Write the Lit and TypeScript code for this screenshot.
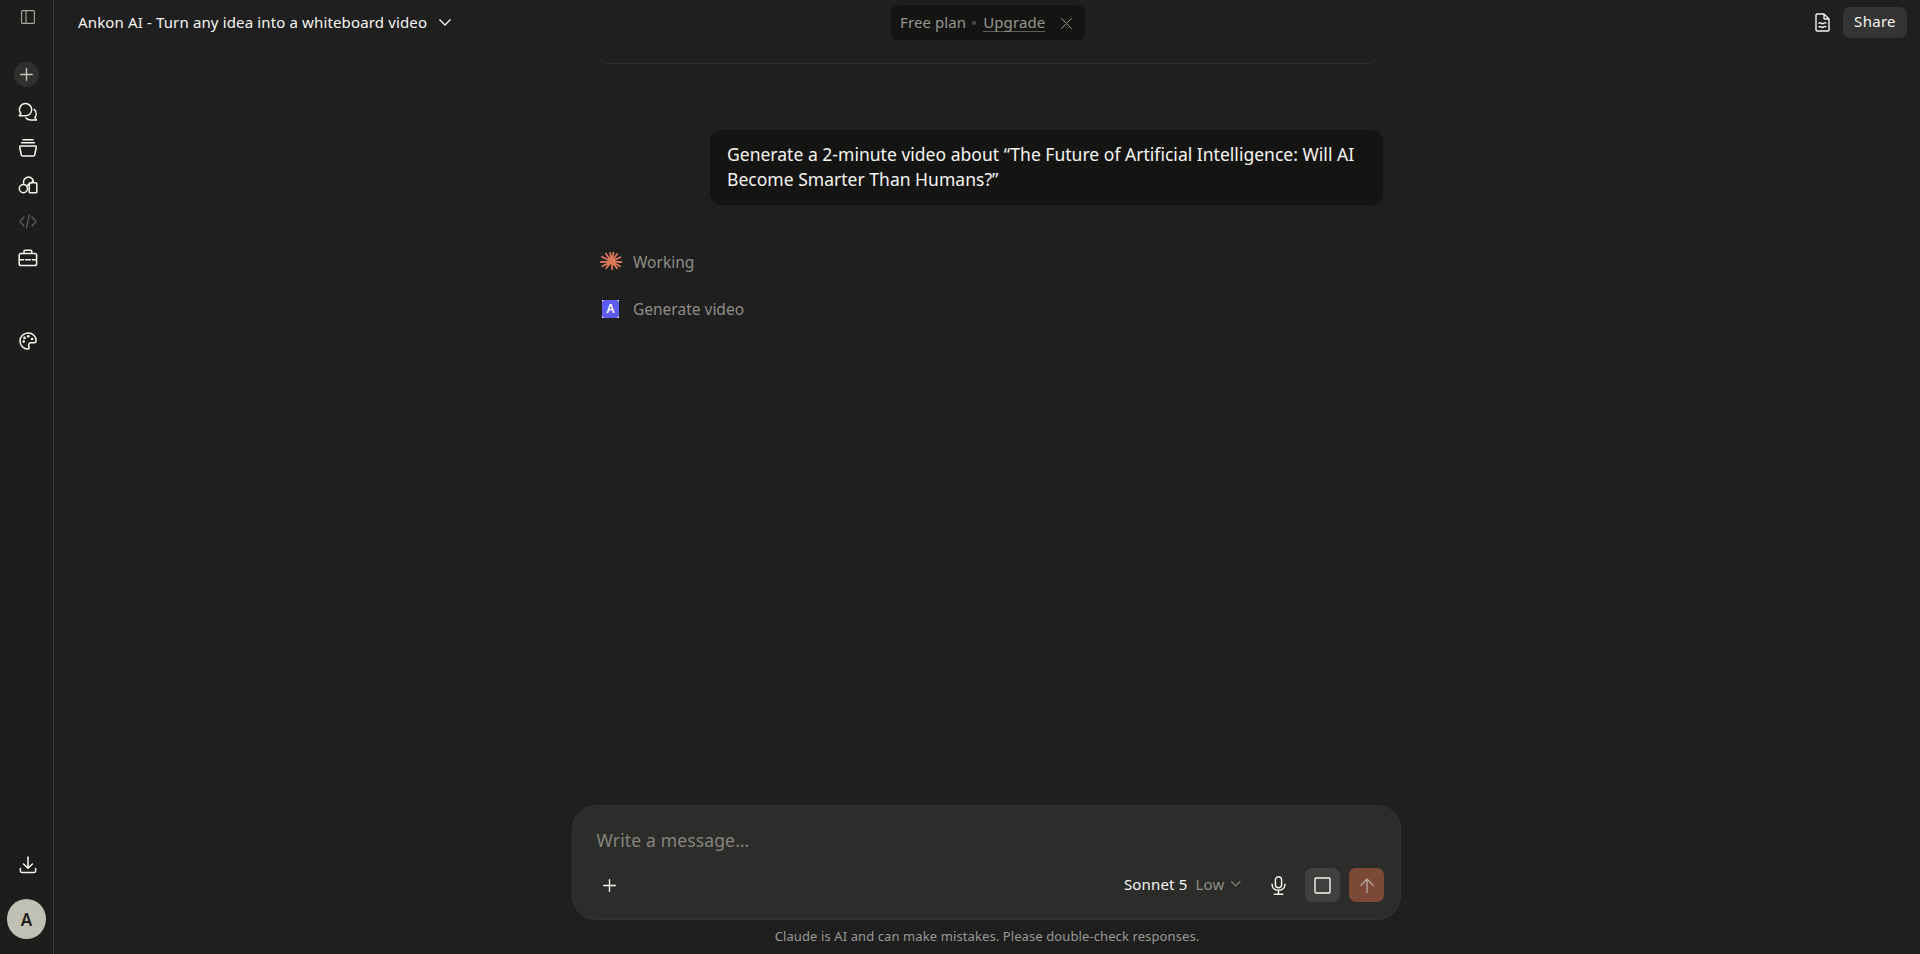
import { LitElement, css, html, svg } from "lit";
import { customElement, property } from "lit/decorators.js";
import { classMap } from "lit/directives/class-map.js";

const icons: Record<string, { w: number; h: number; body: unknown }> = {
  panel: {
    w: 14,
    h: 14,
    body: svg`<rect x="0.6" y="0.6" width="12.8" height="12.8" rx="1" /><path d="M5 0.6v12.8" />`,
  },
  plus: { w: 13, h: 13, body: svg`<path d="M6.5 0.7v11.6M0.7 6.5h11.6" />` },
  chats: {
    w: 20,
    h: 20,
    body: svg`<path d="M7.6 1.6a6.1 6.1 0 1 1 0 12.2H1.3l1.6-2.2A6.1 6.1 0 0 1 7.6 1.6z" />
      <path d="M16.2 7.4c2.3 2.1 2.6 5.5 0.7 8l1.5 2.6h-5.6c-2 0-3.8-0.7-4.9-2" />`,
  },
  projects: {
    w: 20,
    h: 20,
    body: svg`<path d="M5 1.8h10M3.6 4.8h12.8" />
      <path d="M2.6 8h14.8c0.6 0 1 0.4 0.9 1l-1.6 8c-0.1 0.7-0.6 1.1-1.3 1.1H4.6c-0.7 0-1.2-0.4-1.3-1.1L1.7 9c-0.1-0.6 0.3-1 0.9-1z" />`,
  },
  artifacts: {
    w: 20,
    h: 20,
    body: svg`<circle cx="5.4" cy="13.6" r="4.1" />
      <path d="M5.6 8.2a4.9 4.9 0 0 1 9.7-2.2" />
      <path d="M8.6 10.8L15.4 6.2" />
      <rect x="11.2" y="7.8" width="7.6" height="9.9" rx="0.8" />`,
  },
  code: {
    w: 18,
    h: 15,
    body: svg`<path d="M5 3L1 7.5 5 12M13 3l4 4.5L13 12M10.4 0.8L7.4 14.2" />`,
  },
  briefcase: {
    w: 20,
    h: 18,
    body: svg`<rect x="1.2" y="4.4" width="17.4" height="12.2" rx="1.8" />
      <path d="M6 4.2V2.4c0-0.7 0.4-1.1 1.1-1.1h5.6c0.7 0 1.1 0.4 1.1 1.1v1.8M1.4 10.8h4.2M7.6 10.8h4.8M14.4 10.8h4" />`,
  },
  palette: {
    w: 18,
    h: 18,
    body: svg`<path d="M9.2 1C4.6 1 1 4.5 1 8.9 1 13.5 4.6 17.1 8.9 17.1c1.2 0 1.4-0.9 1-2-0.5-1.6-0.6-4.3 2-4.3h3.2c1.4 0 2-0.7 2-2C17.1 4.3 13.7 1 9.2 1z" />
      <g class="dots"><circle cx="4.7" cy="9.6" r="1.3" /><circle cx="5.5" cy="5.9" r="1.3" /><circle cx="9.2" cy="4.3" r="1.3" /><circle cx="13.1" cy="7" r="1.3" /></g>`,
  },
  download: {
    w: 18,
    h: 18,
    body: svg`<path d="M9 1v11M4.5 8L9 12.2 13.5 8M1.4 12.5v2.6c0 0.8 0.5 1.3 1.3 1.3h12.6c0.8 0 1.3-0.5 1.3-1.3v-2.6" />`,
  },
  chevron: { w: 12, h: 7, body: svg`<path d="M0.8 0.8L6 6l5.2-5.2" />` },
  close: { w: 11, h: 11, body: svg`<path d="M0.5 0.5l10 10M10.5 0.5l-10 10" />` },
  doc: {
    w: 15,
    h: 19,
    body: svg`<path d="M9 1H2.3C1.5 1 1 1.5 1 2.3v14.4c0 0.8 0.5 1.3 1.3 1.3h10.4c0.8 0 1.3-0.5 1.3-1.3V6L9 1v4.2c0 0.5 0.3 0.8 0.8 0.8H14" />
      <path d="M4 10.2q1.2-1 2.3 0t2.3 0 2.3-0.2M4 13.9q1.2-1 2.3 0t2.3 0 2.3-0.2" />`,
  },
  mic: {
    w: 15,
    h: 19,
    body: svg`<rect x="4.4" y="0.8" width="6.2" height="11" rx="3.1" />
      <path d="M1 8.2c0.2 3.7 2.8 6.1 6.5 6.1s6.3-2.4 6.5-6.1M7.5 14.4v3.6M3.2 18.2h8.6" />`,
  },
  stop: { w: 17, h: 17, body: svg`<rect x="1" y="1" width="15" height="15" rx="1" />` },
  arrow: { w: 14, h: 15, body: svg`<path d="M7 14.5V1.2M1 7.2L7 1l6 6.2" />` },
  spark: {
    w: 22,
    h: 18,
    body: svg`<path d="M11.3 9.6L5.8 1.6M11.3 9.6L10.2 0.8M11.3 9.6L13.5 0.8M11.3 9.6L17.2 2M11.3 9.6L20.4 5.2M11.3 9.6L21.3 10M11.3 9.6L20 14.2M11.3 9.6L17 16.2M11.3 9.6L12.3 17.2M11.3 9.6L6.2 16.2M11.3 9.6L2.2 14.2M11.3 9.6L0.8 10M11.3 9.6L2 4.8" />`,
  },
};

@customElement("ui-icon")
export class UiIcon extends LitElement {
  @property() name = "plus";

  static styles = css`
    :host {
      display: inline-flex;
      flex: none;
    }

    svg {
      display: block;
      fill: none;
      stroke: currentColor;
      stroke-width: var(--stroke, 1.4);
      stroke-linecap: round;
      stroke-linejoin: round;
    }

    .dots {
      fill: currentColor;
      stroke: none;
    }
  `;

  render() {
    const { w, h, body } = icons[this.name];
    return html`<svg width=${w} height=${h} viewBox="0 0 ${w} ${h}">${body}</svg>`;
  }
}

@customElement("side-rail")
export class SideRail extends LitElement {
  static styles = css`
    :host {
      display: flex;
      flex-direction: column;
      align-items: center;
      box-sizing: border-box;
      width: 54px;
      background: #1d1d1c;
      border-right: 1px solid #3e3e3d;
      color: #f7f6f1;
      --stroke: 1.5;
    }

    .item {
      display: flex;
      align-items: center;
      justify-content: center;
      height: 36.5px;
      padding-left: 3.5px;
    }

    .toggle {
      height: 34px;
      color: #a9a8a1;
      --stroke: 1.1;
    }

    .new {
      display: flex;
      align-items: center;
      justify-content: center;
      width: 25px;
      height: 25px;
      margin: 28px 0 6.5px;
      border-radius: 50%;
      background: #30302e;
      color: #c9c8c1;
      --stroke: 1.3;
    }

    .muted {
      color: #5b5b58;
      --stroke: 1.3;
    }

    .design {
      margin-top: 47px;
    }

    .download {
      margin-top: auto;
    }

    .avatar {
      display: flex;
      align-items: center;
      justify-content: center;
      width: 39px;
      height: 40px;
      margin: 16px 0 15px;
      border-radius: 50%;
      background: #c1c0b5;
      color: #1f1f1e;
      font-size: 17px;
      font-weight: 600;
    }
  `;

  render() {
    return html`
      <div class="item toggle"><ui-icon name="panel"></ui-icon></div>
      <div class="new"><ui-icon name="plus"></ui-icon></div>
      ${["chats", "projects", "artifacts", "code", "briefcase"].map(
        (name) => html`<div class=${classMap({ item: true, muted: name === "code" })}>
          <ui-icon name=${name}></ui-icon>
        </div>`
      )}
      <div class="item design"><ui-icon name="palette"></ui-icon></div>
      <div class="item download"><ui-icon name="download"></ui-icon></div>
      <div class="avatar">A</div>
    `;
  }
}

@customElement("chat-header")
export class ChatHeader extends LitElement {
  static styles = css`
    :host {
      display: grid;
      grid-template-columns: 1fr auto 1fr;
      align-items: center;
      height: 45px;
      padding: 0 13px 0 15px;
      font-size: 15px;
      line-height: 20px;
    }

    .title {
      display: flex;
      align-items: center;
      gap: 12px;
      margin: 0 0 1px 9px;
      color: #f7f6f1;
      font-weight: 450;
      letter-spacing: 0.14px;
      --stroke: 1.3;
    }

    .plan {
      display: flex;
      align-items: center;
      box-sizing: border-box;
      width: 194px;
      height: 35px;
      padding: 0 13px 1px 9px;
      border-radius: 7px;
      background: #141413;
      color: #97968f;
      letter-spacing: 0.1px;
      --stroke: 1;
    }

    .dot {
      width: 4px;
      height: 4px;
      margin: 2px 7px 0 6px;
      border-radius: 50%;
      background: #4c4c49;
    }

    .upgrade {
      height: 19px;
      line-height: 20px;
      border-bottom: 1px solid #5e5d59;
    }

    .plan ui-icon {
      margin: 2px 0 0 auto;
    }

    .actions {
      display: flex;
      align-items: center;
      justify-content: flex-end;
      gap: 13px;
      color: #f7f6f1;
    }

    .share {
      box-sizing: border-box;
      width: 64px;
      height: 31px;
      padding-top: 4px;
      border-radius: 7px;
      background: #343434;
      text-align: center;
      font-weight: 450;
      letter-spacing: 0.3px;
    }
  `;

  render() {
    return html`
      <div class="title">
        <span>Ankon AI - Turn any idea into a whiteboard video</span>
        <ui-icon name="chevron"></ui-icon>
      </div>
      <div class="plan">
        <span>Free plan</span>
        <span class="dot"></span>
        <span class="upgrade">Upgrade</span>
        <ui-icon name="close"></ui-icon>
      </div>
      <div class="actions">
        <ui-icon name="doc"></ui-icon>
        <div class="share">Share</div>
      </div>
    `;
  }
}

@customElement("chat-composer")
export class ChatComposer extends LitElement {
  static styles = css`
    :host {
      display: flex;
      flex-direction: column;
      justify-content: space-between;
      box-sizing: border-box;
      width: 829px;
      height: 115px;
      margin-right: 1px;
      padding: 22px 16px 17px 23.5px;
      border: 1px solid #333332;
      border-radius: 24px;
      background: #2c2c2a;
      font-size: 15px;
    }

    .placeholder {
      color: #85847e;
      font-size: 17.5px;
      line-height: 25px;
      letter-spacing: 0.15px;
    }

    .tools {
      display: flex;
      align-items: center;
      color: #f7f6f1;
    }

    .add {
      margin: 0 auto 0 6.5px;
    }

    .model {
      margin-bottom: 2px;
      font-weight: 450;
      letter-spacing: 0.15px;
    }

    .effort {
      display: flex;
      align-items: center;
      gap: 7px;
      margin: 0 30px 2px 8px;
      color: #8e8d87;
      letter-spacing: 0.2px;
    }

    .chevron {
      zoom: 0.8;
    }

    .button {
      display: flex;
      align-items: center;
      justify-content: center;
      width: 35px;
      height: 34px;
      border-radius: 7px;
    }

    .stop {
      margin: 0 9px 0 19px;
      background: #40403e;
    }

    .send {
      background: #7c4937;
      color: #b3a49b;
    }
  `;

  render() {
    return html`
      <div class="placeholder">Write a message…</div>
      <div class="tools">
        <ui-icon class="add" name="plus"></ui-icon>
        <span class="model">Sonnet 5</span>
        <span class="effort">Low <ui-icon class="chevron" name="chevron"></ui-icon></span>
        <ui-icon name="mic"></ui-icon>
        <div class="button stop"><ui-icon name="stop"></ui-icon></div>
        <div class="button send"><ui-icon name="arrow"></ui-icon></div>
      </div>
    `;
  }
}

@customElement("app-root")
export class AppRoot extends LitElement {
  static styles = css`
    :host {
      display: grid;
      grid-template-columns: 54px 1fr;
      height: 954px;
      overflow: hidden;
      background: #1f1f1f;
      color: #f7f6f1;
      font-family: "Noto Sans", "Open Sans", sans-serif;
    }

    main {
      display: flex;
      flex-direction: column;
      align-items: center;
      min-width: 0;
    }

    chat-header {
      align-self: stretch;
    }

    .thread {
      display: flex;
      flex-direction: column;
      flex: 1;
      width: 790px;
      margin-left: 2px;
    }

    .card {
      display: flex;
      justify-content: flex-end;
      gap: 13px;
      height: 18px;
      margin: 0 2px 0 3px;
      padding-right: 6px;
      border: solid #30302f;
      border-width: 0 1px 1px;
      border-radius: 0 0 14px 14px;
      mask-image: linear-gradient(transparent 50%, #000 95%);
    }

    .ghost {
      width: 106px;
      height: 11px;
      border-radius: 0 0 7px 7px;
      background: #343433;
    }

    .ghost.short {
      width: 80px;
    }

    .prompt {
      align-self: flex-end;
      box-sizing: border-box;
      width: 673px;
      height: 75px;
      margin: 66px 0 45px;
      padding: 12px 17px;
      border-radius: 12px;
      background: #141413;
      font-size: 17.5px;
      line-height: 25px;
      letter-spacing: 0.02px;
      white-space: nowrap;
    }

    .step {
      display: flex;
      align-items: center;
      height: 24px;
      margin-bottom: 22.5px;
      color: #8e8d87;
      font-size: 15.5px;
    }

    .mark {
      display: flex;
      justify-content: center;
      width: 22px;
      margin: 0 11.5px 2px 6.5px;
      color: #dd7857;
      --stroke: 1.8;
    }

    .logo {
      width: 17px;
      height: 18px;
      margin-top: 2px;
      background: #fff;
    }

    .logo span {
      display: block;
      height: 18px;
      border-radius: 3px;
      background: #5f5cf5;
      color: #fff;
      font-size: 12px;
      font-weight: 600;
      line-height: 18px;
      text-align: center;
    }

    .note {
      height: 34px;
      color: #9a9993;
      font-size: 13px;
      line-height: 32px;
      letter-spacing: 0.1px;
    }
  `;

  render() {
    return html`
      <side-rail></side-rail>
      <main>
        <chat-header></chat-header>
        <div class="thread">
          <div class="card">
            <div class="ghost"></div>
            <div class="ghost short"></div>
          </div>
          <div class="prompt">
            Generate a 2-minute video about “The Future of Artificial Intelligence: Will AI<br />Become
            Smarter Than Humans?”
          </div>
          <div class="step">
            <div class="mark"><ui-icon name="spark"></ui-icon></div>
            Working
          </div>
          <div class="step">
            <div class="mark"><div class="logo"><span>A</span></div></div>
            Generate video
          </div>
        </div>
        <chat-composer></chat-composer>
        <div class="note">Claude is AI and can make mistakes. Please double-check responses.</div>
      </main>
    `;
  }
}
